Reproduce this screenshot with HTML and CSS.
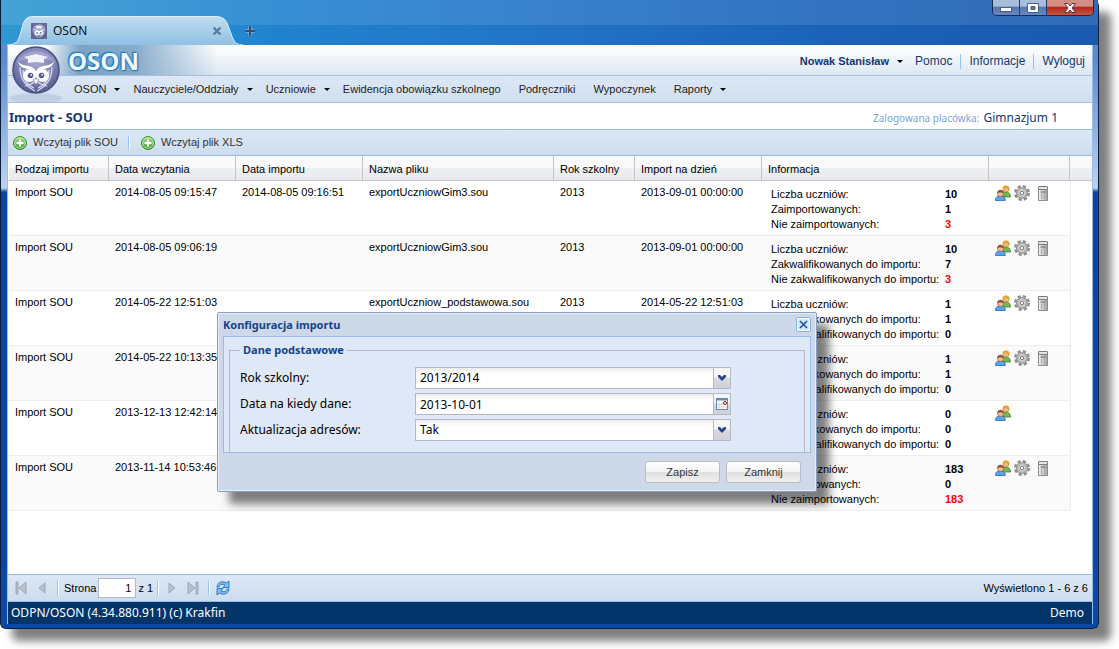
FILE: index.html
```html
<!DOCTYPE html>
<html lang="pl">
<head>
<meta charset="utf-8">
<title>OSON</title>
<link rel="stylesheet" href="styles.css">
</head>

<body>

<!-- Shared icons -->
<svg class="defs" width="0" height="0">
<defs>
<linearGradient id="gGreen" x1="0" y1="0" x2="0" y2="1"><stop offset="0" stop-color="#a6dc8c"/><stop offset="1" stop-color="#3f9a32"/></linearGradient>
<linearGradient id="gGrey" x1="0" y1="0" x2="1" y2="0"><stop offset="0" stop-color="#f4f4f4"/><stop offset="1" stop-color="#a0a0a0"/></linearGradient>
<linearGradient id="gTab" x1="0" y1="0" x2="0" y2="1"><stop offset="0" stop-color="#c0ddf0"/><stop offset="1" stop-color="#8ebfe4"/></linearGradient>
<radialGradient id="gOwl" cx="0.5" cy="0.35" r="0.65"><stop offset="0" stop-color="#a4a7cf"/><stop offset="0.6" stop-color="#7f83b5"/><stop offset="1" stop-color="#555a92"/></radialGradient>
</defs>
<symbol id="add" viewBox="0 0 16 16">
<circle cx="8" cy="8" r="6.5" fill="url(#gGreen)" stroke="#459039"/>
<circle cx="8" cy="8" r="5.2" fill="none" stroke="#c6eab5" stroke-width="0.8"/>
<path d="M8 4.5v7M4.5 8h7" stroke="#fff" stroke-width="2.2"/>
</symbol>
<symbol id="users" viewBox="0 0 16 16">
<path d="M6.5 11c0-3 1.500-4 4-4s5 1 5 5H8z" fill="#6dba52" stroke="#3c8329" stroke-width="0.8"/>
<circle cx="11" cy="4" r="3" fill="#f3b985" stroke="#c58122" stroke-width="0.7"/>
<path d="M7.500 4C7.500 1.500 9 .5 11 .5S14.500 1.500 14.500 4.500C13 4 12 3.500 10.500 3z" fill="#e3a525"/>
<path d="M.5 15.500c0-3.500 1.500-4.500 4.800-4.500s5 1 5 4.500z" fill="#5ba3ef" stroke="#2767b4" stroke-width="0.8"/>
<circle cx="5.500" cy="8.500" r="3" fill="#f0bd94" stroke="#99603b" stroke-width="0.7"/>
<path d="M2.200 8.500c0-2.500 1.500-3.700 3.300-3.700s3.400 1.200 3.400 3.700C7.500 8 6.500 7.800 5 7.300z" fill="#8b5530"/>
</symbol>
<symbol id="gear" viewBox="0 0 16 16">
<circle cx="8" cy="8" r="6.500" fill="none" stroke="#8f8f8f" stroke-width="3" stroke-dasharray="3.100 2.005"/>
<circle cx="8" cy="8" r="5.400" fill="#c4c4c4" stroke="#9b9b9b" stroke-width="1.400"/>
<circle cx="8" cy="8" r="3.400" fill="#d8d8d8" stroke="#b3b3b3" stroke-width="0.7"/>
<circle cx="8" cy="8" r="1.700" fill="#fff" stroke="#787878"/>
</symbol>
<symbol id="bin" viewBox="0 0 16 16">
<path d="M3.500 4.500h9v11h-9z" fill="url(#gGrey)" stroke="#8b8b8b"/>
<rect x="3.500" y="1.500" width="9" height="3" rx="0.500" fill="#e6e6e6" stroke="#7b7b7b"/>
<path d="M6.500 8.500v5.500M9.500 8.500v5.500" stroke="#a9a9a9"/>
<path d="M5.500 7h5" stroke="#777" stroke-width="1.200"/>
</symbol>
<symbol id="owl" viewBox="0 0 48 48">
<circle cx="24" cy="24" r="23" fill="url(#gOwl)" stroke="#4d527f" stroke-width="1.600"/>
<path d="M4 17C9 3 37 0 44 17 34 11 14 11 4 17z" fill="#bfc1df" opacity="0.4"/>
<path d="M12 11l12-3 12 3-4 2v4l-8-1-8 1v-4z" fill="#f1f2f9"/>
<path d="M6 15c4 7 13 2 18 10 5-8 14-3 18-10-1 8-9 7-13 9l-5 6-5-6C15 22 7 23 6 15z" fill="#fff"/>
<path d="M8 21c0 12 5 19 15 24M40 21c0 12-5 19-15 24M11 24c0 9 4 15 11 18M37 24c0 9-4 15-11 18M13 40c6-1 10-4 14-8M35 40c-6-1-10-4-14-8" fill="none" stroke="#dcdff0" stroke-width="1.200"/>
<circle cx="17.500" cy="29.500" r="6.500" fill="#fff"/><circle cx="30.500" cy="29.500" r="6.500" fill="#fff"/>
<circle cx="18.500" cy="29.500" r="2.800" fill="#55598d"/><circle cx="29.500" cy="29.500" r="2.800" fill="#55598d"/>
<circle cx="19.200" cy="28.800" r="0.900" fill="#fff"/><circle cx="30.200" cy="28.800" r="0.900" fill="#fff"/>
<path d="M21 33h6l-3 6z" fill="#fff" stroke="#7b7fb0" stroke-width="0.600"/>
</symbol>
<symbol id="combo" viewBox="0 0 16 16">
<path d="M4 5h2l2 2 2-2h2v2l-4 4-4-4z" fill="#26468c"/>
</symbol>
</svg>

<div class="window">

<!-- Browser title bar -->
<div class="titlebar">
<div class="tab">
<svg class="tab-shape" width="236" height="30" viewBox="0 0 236 30"><path d="M0 30C12 29 12 22 15 12 17 4 19 .5 27 .5H208C217 .5 219 4 222 12 226 22 226 29 236 30z" fill="url(#gTab)"/><path d="M0 29C12 29 12 22 15 12 17 4 19 .5 27 .5H208C217 .5 219 4 222 12 226 22 226 29 236 29" fill="none" stroke="#e0f2fc"/></svg>
<svg class="tab-icon" width="16" height="16"><rect width="16" height="16" fill="#646a98"/><use href="#owl" width="16" height="16"/></svg>
<span class="tab-title">OSON</span>
<svg class="tab-close" width="10" height="10"><path d="M1.500 1.500l7 7M8.500 1.500l-7 7" stroke="#587c9d" stroke-width="2.400"/></svg>
</div>
<svg class="tab-new" width="12" height="12"><path d="M6 1v10M1 6h10" stroke="#9cc0dd" stroke-width="3"/><path d="M6 1v10M1 6h10" stroke="#34526f" stroke-width="2"/></svg>
<div class="win-buttons">
<button class="win-btn" aria-label="Minimalizuj"><svg width="14" height="12"><rect x="1.500" y="5.500" width="11" height="4" fill="#fff" stroke="#515f7d"/></svg></button>
<button class="win-btn" aria-label="Maksymalizuj"><svg width="14" height="12"><path d="M1.500 1.500h11v9h-11zM5 4.500v3h4v-3z" fill="#fff" fill-rule="evenodd" stroke="#515f7d"/></svg></button>
<button class="win-btn win-close" aria-label="Zamknij okno"><svg width="14" height="12"><path d="M1.500 1.500h3.500l2 2.500 2-2.500h3.500L9 6l3.500 4.500H9L7 8l-2 2.500H1.500L5 6z" fill="#fff" stroke="#5b3a40"/></svg></button>
</div>
</div>

<div class="page">

<!-- Header -->
<div class="header">
<svg class="owl" width="64" height="58"><ellipse cx="32" cy="52" rx="26" ry="5" fill="#9aa8cc" opacity="0.3"/><use href="#owl" x="8" width="48" height="48"/></svg>
<div class="brand"><span>OSON</span></div>
<div class="user-links">
<a href="#" class="user">Nowak Stanisław <i class="arrow"></i></a>
<a href="#">Pomoc</a>
<a href="#" class="sep">Informacje</a>
<a href="#" class="sep">Wyloguj</a>
</div>
</div>

<div class="menu">
<a href="#">OSON <i class="arrow"></i></a>
<a href="#">Nauczyciele/Oddziały <i class="arrow"></i></a>
<a href="#">Uczniowie <i class="arrow"></i></a>
<a href="#">Ewidencja obowiązku szkolnego</a>
<a href="#">Podręczniki</a>
<a href="#">Wypoczynek</a>
<a href="#">Raporty <i class="arrow"></i></a>
</div>

<div class="titleline">
<h1>Import - SOU</h1>
<div><span class="muted">Zalogowana placówka:</span> Gimnazjum 1</div>
</div>

<!-- Toolbar -->
<div class="toolbar">
<button class="tool"><svg width="16" height="16"><use href="#add"/></svg>Wczytaj plik SOU</button>
<span class="divider"></span>
<button class="tool"><svg width="16" height="16"><use href="#add"/></svg>Wczytaj plik XLS</button>
</div>

<!-- Import list -->
<div class="grid">
<table>
<colgroup><col class="c-type"><col class="c-date"><col class="c-date"><col class="c-file"><col class="c-year"><col class="c-date"><col class="c-info"><col class="c-act"><col></colgroup>
<thead>
<tr><th>Rodzaj importu</th><th>Data wczytania</th><th>Data importu</th><th>Nazwa pliku</th><th>Rok szkolny</th><th>Import na dzień</th><th>Informacja</th><th></th><th></th></tr>
</thead>
<tbody>
<tr>
<td>Import SOU</td><td>2014-08-05 09:15:47</td><td>2014-08-05 09:16:51</td><td>exportUczniowGim3.sou</td><td>2013</td><td>2013-09-01 00:00:00</td>
<td><dl><dt>Liczba uczniów:</dt><dd>10</dd><dt>Zaimportowanych:</dt><dd>1</dd><dt>Nie zaimportowanych:</dt><dd class="bad">3</dd></dl></td>
<td class="actions"><svg><use href="#users"/></svg><svg><use href="#gear"/></svg><svg><use href="#bin"/></svg></td><td></td>
</tr>
<tr>
<td>Import SOU</td><td>2014-08-05 09:06:19</td><td></td><td>exportUczniowGim3.sou</td><td>2013</td><td>2013-09-01 00:00:00</td>
<td><dl><dt>Liczba uczniów:</dt><dd>10</dd><dt>Zakwalifikowanych do importu:</dt><dd>7</dd><dt>Nie zakwalifikowanych do importu:</dt><dd class="bad">3</dd></dl></td>
<td class="actions"><svg><use href="#users"/></svg><svg><use href="#gear"/></svg><svg><use href="#bin"/></svg></td><td></td>
</tr>
<tr>
<td>Import SOU</td><td>2014-05-22 12:51:03</td><td></td><td>exportUczniow_podstawowa.sou</td><td>2013</td><td>2014-05-22 12:51:03</td>
<td><dl><dt>Liczba uczniów:</dt><dd>1</dd><dt>Zakwalifikowanych do importu:</dt><dd>1</dd><dt>Nie zakwalifikowanych do importu:</dt><dd>0</dd></dl></td>
<td class="actions"><svg><use href="#users"/></svg><svg><use href="#gear"/></svg><svg><use href="#bin"/></svg></td><td></td>
</tr>
<tr>
<td>Import SOU</td><td>2014-05-22 10:13:35</td><td></td><td></td><td></td><td></td>
<td><dl><dt>Liczba uczniów:</dt><dd>1</dd><dt>Zakwalifikowanych do importu:</dt><dd>1</dd><dt>Nie zakwalifikowanych do importu:</dt><dd>0</dd></dl></td>
<td class="actions"><svg><use href="#users"/></svg><svg><use href="#gear"/></svg><svg><use href="#bin"/></svg></td><td></td>
</tr>
<tr>
<td>Import SOU</td><td>2013-12-13 12:42:14</td><td></td><td></td><td></td><td></td>
<td><dl><dt>Liczba uczniów:</dt><dd>0</dd><dt>Zakwalifikowanych do importu:</dt><dd>0</dd><dt>Nie zakwalifikowanych do importu:</dt><dd>0</dd></dl></td>
<td class="actions"><svg><use href="#users"/></svg></td><td></td>
</tr>
<tr>
<td>Import SOU</td><td>2013-11-14 10:53:46</td><td></td><td></td><td></td><td></td>
<td><dl><dt>Liczba uczniów:</dt><dd>183</dd><dt>Zaimportowanych:</dt><dd>0</dd><dt>Nie zaimportowanych:</dt><dd class="bad">183</dd></dl></td>
<td class="actions"><svg><use href="#users"/></svg><svg><use href="#gear"/></svg><svg><use href="#bin"/></svg></td><td></td>
</tr>
</tbody>
</table>
</div>

<!-- Paging bar -->
<div class="paging">
<button class="pg" aria-label="Pierwsza strona"><svg width="16" height="16"><path d="M3 2h2v12H3zM13 2v12L6 8z" fill="#b8c0cb" stroke="#8f9aa8" stroke-width="0.7"/></svg></button>
<button class="pg" aria-label="Poprzednia strona"><svg width="16" height="16"><path d="M11 3v10L5 8z" fill="#b8c0cb" stroke="#8f9aa8" stroke-width="0.7"/></svg></button>
<span class="divider"></span>
<label for="pageno">Strona</label>
<input id="pageno" type="text" value="1">
<span>z 1</span>
<span class="divider"></span>
<button class="pg" aria-label="Następna strona"><svg width="16" height="16"><path d="M5 3v10l6-5z" fill="#b8c0cb" stroke="#8f9aa8" stroke-width="0.7"/></svg></button>
<button class="pg" aria-label="Ostatnia strona"><svg width="16" height="16"><path d="M11 2h2v12h-2zM3 2v12l7-6z" fill="#b8c0cb" stroke="#8f9aa8" stroke-width="0.7"/></svg></button>
<span class="divider"></span>
<button class="pg" aria-label="Odśwież"><svg width="16" height="16"><path d="M2 7C2 3 7 0 11.500 3L14 1v6.500H8L10 5C7 3.500 4.500 4.500 4 7zM14 9c0 4-5 7-9.500 4L2 15V8.500h6L6 11c3 1.500 5.500.5 6-2z" fill="#7dbff5" stroke="#286fbd" stroke-width="0.9"/></svg></button>
<span class="summary">Wyświetlono 1 - 6 z 6</span>
</div>

<div class="statusbar"><span>ODPN/OSON (4.34.880.911) (c) Krakfin</span><span>Demo</span></div>

</div>

<!-- Configuration dialog -->
<div class="dialog" role="dialog" aria-labelledby="dlgTitle">
<div class="dialog-head">
<span id="dlgTitle">Konfiguracja importu</span>
<button class="dialog-close" aria-label="Zamknij"><svg width="13" height="13"><rect x="1" y="1" width="11" height="11" fill="#d5e6fa"/><path d="M3 3l7 7M10 3l-7 7" stroke="#1f4f96" stroke-width="1.600"/></svg></button>
</div>
<form class="dialog-body">
<fieldset>
<legend>Dane podstawowe</legend>
<div class="row">
<label for="year">Rok szkolny:</label>
<div class="field"><select id="year"><option>2013/2014</option></select><span class="trigger"><svg width="16" height="16"><use href="#combo"/></svg></span></div>
</div>
<div class="row">
<label for="day">Data na kiedy dane:</label>
<div class="field"><input id="day" type="text" value="2013-10-01"><button type="button" class="trigger" aria-label="Kalendarz"><svg width="14" height="14"><rect x="1.500" y="1.500" width="11" height="11" fill="#fff" stroke="#6687b8"/><path d="M1 2.500h12" stroke="#6687b8" stroke-width="2"/><path d="M4 5v7M7 5v7M2 7.500h10M2 10h10" stroke="#d5d5d5"/><circle cx="10" cy="6" r="1.500" fill="#fff" stroke="#9c1717"/></svg></button></div>
</div>
<div class="row">
<label for="addr">Aktualizacja adresów:</label>
<div class="field"><select id="addr"><option>Tak</option></select><span class="trigger"><svg width="16" height="16"><use href="#combo"/></svg></span></div>
</div>
</fieldset>
</form>
<div class="dialog-foot">
<button class="btn">Zapisz</button>
<button class="btn">Zamknij</button>
</div>
</div>

</div>

</body>
</html>
```
FILE: styles.css
```css
* {
  box-sizing: border-box;
}

body {
  margin: 0;
  min-height: 100vh;
  display: flex;
  padding: 0 20px 20px 0;
  background: #fff;
  font: 11px/15px "Liberation Sans", Arial, sans-serif;
  color: #000;
}

a {
  color: inherit;
  text-decoration: none;
}

button {
  padding: 0;
  border: 0;
  background: none;
  font: inherit;
  color: inherit;
}

svg {
  display: block;
  flex: none;
}

.defs {
  position: absolute;
}

/* Browser window frame */
.window {
  position: relative;
  flex: 1;
  display: flex;
  flex-direction: column;
  padding: 0 5px 4px 6px;
  border: 1px solid #0a1c3c;
  border-top: 0;
  border-radius: 0 6px 6px 6px;
  background: linear-gradient(#5b8bcf 0, #5b8bcf 60px, #bdd2ee 188px, #0646a5 192px, #0a49a8 100%);
  box-shadow: 12px 12px 8px rgba(0, 0, 0, 0.5);
}

.titlebar {
  display: flex;
  align-items: flex-end;
  height: 45px;
  margin: 0 -5px 0 -6px;
  padding-left: 6px;
  background:
    linear-gradient(rgba(255, 255, 255, 0.1) 25px, transparent 25px),
    linear-gradient(90deg, #2f98d2, #2183cf 25%, #2273c6 50%, #1b63b9 75%, #1a5aae);
}

.tab {
  position: relative;
  display: flex;
  align-items: center;
  width: 236px;
  height: 29px;
  padding: 0 21px 0 24px;
}

.tab-shape {
  position: absolute;
  left: 0;
  top: 0;
}

.tab-icon,
.tab-title,
.tab-close {
  position: relative;
}

.tab-title {
  flex: 1;
  margin-left: 6px;
  font: 12px/16px "Open Sans", sans-serif;
}

.tab-new {
  margin: 0 0 8px 1px;
}

.win-buttons {
  align-self: flex-start;
  display: flex;
  margin: 0 4px 0 auto;
  border: 1px solid #1b2b4d;
  border-top: 0;
  border-radius: 0 0 5px 5px;
  overflow: hidden;
}

.win-btn {
  display: flex;
  align-items: center;
  justify-content: center;
  width: 27px;
  height: 15px;
  border-right: 1px solid #263c68;
  background: linear-gradient(#a9bddd 40%, #5577b0 50%, #6388c2);
}

.win-close {
  width: 46px;
  border: 0;
  background: linear-gradient(#d48d84 40%, #b02c1b 50%, #ca5440);
}

.page {
  flex: 1;
  display: flex;
  flex-direction: column;
  border-left: 1px solid #99bce8;
  border-right: 1px solid #99bce8;
  background: #fff;
}

/* Header */
.header {
  position: relative;
  display: flex;
  justify-content: space-between;
  height: 31px;
  border-bottom: 1px solid #a9bfd9;
  background: linear-gradient(#fff, #dde7f3);
}

.owl {
  position: absolute;
  left: -4px;
  top: 1px;
}

.brand {
  width: 210px;
  padding-left: 60px;
  background: linear-gradient(90deg, transparent 18%, #7ba3c6 34%, #86abc9 60%, transparent);
  font: bold 24px/32px "Open Sans", sans-serif;
  color: #effaff;
  text-shadow: 0 0 2px #1a78bd, 0 0 2px #1a78bd, 1px 1px 1px #1a78bd, -1px -1px 1px #1a78bd;
}

.user-links {
  display: flex;
  align-items: center;
  padding: 2px 7px 0 0;
  font-size: 12px;
  color: #15376f;
}

.user {
  margin-right: 12px;
  font-size: 11px;
  font-weight: bold;
}

.sep {
  margin-left: 8px;
  padding-left: 8px;
  border-left: 1px solid #98c0f4;
}

.arrow {
  display: inline-block;
  margin: 0 0 2px 5px;
  border: 3px solid transparent;
  border-top-color: #000;
  border-bottom: 0;
}

.menu {
  display: flex;
  gap: 18px;
  height: 27px;
  padding-left: 66px;
  border-bottom: 1px solid #a9bfd9;
  background: linear-gradient(#dde8f5, #cfdef0);
  line-height: 27px;
  color: #222;
}

.menu .arrow {
  margin-right: -5px;
}

.titleline {
  display: flex;
  justify-content: space-between;
  height: 26px;
  padding: 0 34px 0 1px;
  font: 12px/29px "Noto Sans", sans-serif;
  color: #15376f;
}

h1 {
  margin: 0;
  font: bold 13px/29px "Noto Sans", sans-serif;
}

.muted {
  margin-right: 1px;
  font-size: 10px;
  color: #7ba3d6;
}

/* Toolbar */
.toolbar,
.paging {
  display: flex;
  align-items: center;
  height: 27px;
  border: solid #99bce8;
  border-width: 1px 0;
  background: linear-gradient(#dce8f6, #cddcee);
}

.tool {
  display: flex;
  align-items: center;
  gap: 5px;
  padding: 0 4px;
  color: #333;
}

.divider {
  width: 2px;
  height: 14px;
  margin: 0 6px;
  border-left: 1px solid #98c0f4;
  border-right: 1px solid #fff;
}

/* Grid */
.grid {
  flex: 1;
  padding-left: 1px;
}

table {
  width: 100%;
  border-collapse: separate;
  border-spacing: 0;
  table-layout: fixed;
}

.c-type { width: 100px; }
.c-date { width: 127px; }
.c-file { width: 191px; }
.c-year { width: 81px; }
.c-info { width: 227px; }
.c-act { width: 81px; }

th {
  height: 25px;
  padding: 3px 6px 0;
  border-right: 1px solid #c5c5c5;
  border-bottom: 1px solid #c5c5c5;
  background: linear-gradient(#f9f9f9 50%, #eeeff1 50%, #e9eaed);
  font-weight: normal;
  text-align: left;
  white-space: nowrap;
}

th:last-child {
  border-right: 0;
}

td {
  padding: 4px 6px;
  border-bottom: 1px solid #ededed;
  vertical-align: top;
  white-space: nowrap;
}

tbody tr:nth-child(even) td {
  background: #fafafa;
}

tbody tr td:last-child {
  border: 0;
  border-left: 1px solid #ededed;
  background: #fff;
}

dl {
  display: grid;
  grid-template-columns: 174px auto;
  margin: 2px 0 -1px 3px;
}

dd {
  margin: 0;
  font-weight: bold;
}

.bad {
  color: #f00;
}

.actions svg {
  display: inline-block;
  width: 16px;
  height: 16px;
  margin-right: 3px;
}

.actions svg:last-child:not(:first-child) {
  margin: 0 0 0 2px;
}

/* Paging and status */
.paging {
  height: 28px;
  padding: 0 4px 0 5px;
}

.pg {
  width: 16px;
  margin-right: 5px;
}

.paging .divider {
  margin: 0 5px 0 2px;
}

.paging input {
  width: 38px;
  height: 20px;
  margin: 0 2px;
  padding: 0 4px;
  border: 1px solid #b5b8c8;
  background: #fff;
  font: inherit;
  text-align: right;
}

.paging span:nth-of-type(2) {
  margin-right: 2px;
}

.summary {
  margin-left: auto;
}

.statusbar {
  display: flex;
  justify-content: space-between;
  padding: 0 8px 0 3px;
  background: #03346a;
  font: 12px/22px "Noto Sans", sans-serif;
  color: #fff;
}

/* Dialog floats above the list */
.dialog {
  position: absolute;
  left: 216px;
  top: 312px;
  width: 600px;
  padding: 0 5px;
  border: 1px solid #8a9fc0;
  border-radius: 2px;
  background: #cdd9e8;
  box-shadow: 12px 12px 8px rgba(0, 0, 0, 0.5), inset 0 0 0 1px #e4ecf6;
}

.dialog-head {
  display: flex;
  align-items: center;
  justify-content: space-between;
  height: 23px;
  font: bold 11px/23px "Noto Sans", sans-serif;
  color: #15428b;
}

.dialog-close {
  display: flex;
  align-items: center;
  justify-content: center;
  width: 15px;
  height: 15px;
  border: 1px solid #83aee0;
  border-radius: 2px;
  background: #fff;
}

.dialog-body {
  height: 117px;
  padding: 6px 5px 0;
  border: 1px solid #99bce8;
  background: #dfe8f6;
  overflow: hidden;
}

fieldset {
  margin: 0;
  padding: 10px 10px 9px;
  border: 1px solid #b5b8c8;
  border-bottom: 0;
}

legend {
  padding: 0 3px;
  font: bold 11px/14px "Noto Sans", sans-serif;
  color: #15428b;
}

.row {
  display: flex;
  margin-bottom: 4px;
  font: 12px/22px "Noto Sans", sans-serif;
}

.row label {
  width: 175px;
}

.field {
  display: flex;
  width: 316px;
}

.field select,
.field input {
  flex: 1;
  min-width: 0;
  height: 22px;
  margin: 0;
  padding: 0 4px;
  border: 1px solid #b5b8c8;
  border-radius: 0;
  background: linear-gradient(#ededed, #fff 6px);
  font: inherit;
  line-height: 20px;
  color: #000;
  appearance: none;
}

.trigger {
  display: flex;
  align-items: center;
  justify-content: center;
  width: 17px;
  height: 22px;
  border: 1px solid #b5b8c8;
  border-left: 0;
  background: linear-gradient(#f5f5f5 45%, #d9dade 50%, #cfd1d6);
}

span.trigger {
  pointer-events: none;
}

.dialog-foot {
  display: flex;
  justify-content: flex-end;
  gap: 6px;
  padding: 8px 10px 8px 0;
}

.btn {
  width: 75px;
  height: 22px;
  border: 1px solid #b9bcc2;
  border-radius: 3px;
  background: linear-gradient(#fff, #f3f3f3 48%, #e0e0e0 52%, #f0f0f0);
  color: #333;
}
```
